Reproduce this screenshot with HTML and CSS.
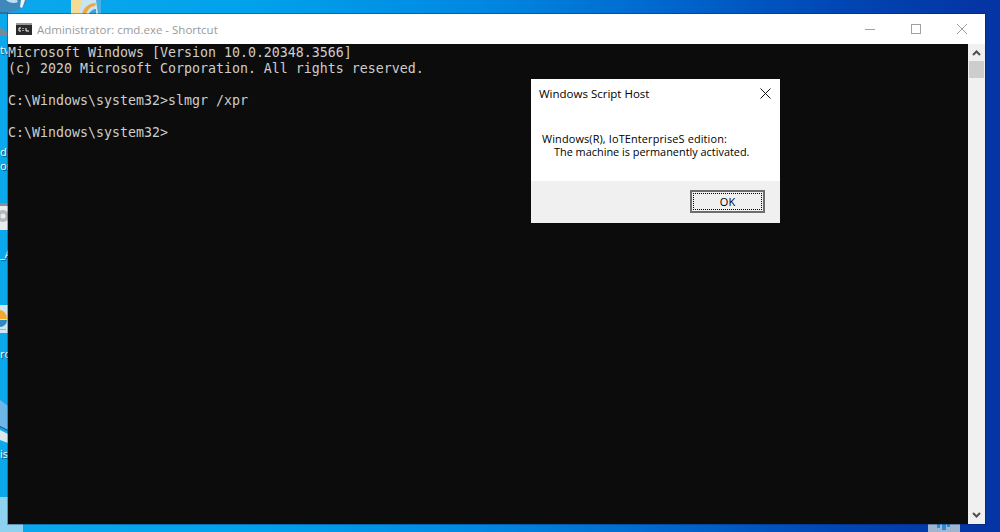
FILE: index.html
```html
<!DOCTYPE html>
<html lang="en">
<head>
<meta charset="utf-8">
<title>cmd</title>
<link rel="stylesheet" href="styles.css">
</head>
<body>
<main class="desktop">
  <div class="dicon folder-top"><svg width="32" height="14" viewBox="0 0 32 14"><path d="M0 0h30v14H0z" fill="#f4dc94"/><path d="M11 0h19v14H8z" fill="#c6e6f5"/><path d="M11 14C13 7 18 3 25 3l-1 3c-4 0-7 3-9 8z" fill="#f2a53a"/><path d="M18 14c1-3 4-5 7-5v5z" fill="#3f9fd6"/><path d="M25 0h5v14h-3z" fill="#4eaedd"/></svg></div>
  <div class="dicon globe"><svg width="30" height="40" viewBox="0 0 30 40"><path d="M0 0h27c-1 6-8 11-16 12-4 1-8 1-11 0z" fill="#3f88bb"/><path d="M6 0c3 3 8 4 12 2l-1-2z" fill="#bfe0f2"/><path d="M21 0h4c-1 3-2 6-3 8l-2-1z" fill="#e8f4fa"/><path d="M0 27l8 6v3H0z" fill="#78899a"/><path d="M0 12h8v2H0z" fill="#2d6f9f"/></svg></div>
  <span class="dlabel l1">tv</span>
  <span class="dlabel l2">d.</span>
  <span class="dlabel l3">or</span>
  <div class="dicon gear"><svg width="8" height="27" viewBox="0 0 8 27"><rect width="8" height="27" fill="#e9ebec"/><rect width="8" height="3" fill="#8b8f93"/><circle cx="3" cy="13" r="6" fill="#b4b8bc"/><circle cx="3" cy="13" r="2.5" fill="#e9ebec"/></svg></div>
  <span class="dlabel l4">_A</span>
  <div class="dicon sun"><svg width="8" height="28" viewBox="0 0 8 28"><rect width="8" height="28" fill="#cfe6f3"/><path d="M0 5a7 9 0 0 1 7 9H0z" fill="#f2a92e"/><path d="M0 15h7a7 7 0 0 1-7 7z" fill="#2f87c4"/><rect y="24" width="6" height="1" fill="#e8a53a"/></svg></div>
  <span class="dlabel l5">ro</span>
  <div class="dicon drive"><svg width="8" height="46" viewBox="0 0 8 46"><path d="M0 0l8 6v24L0 26z" fill="#6db7e8"/><path d="M0 26l8 4v1l-8-4z" fill="#1d4f7a"/><path d="M0 30l8 4v9l-8-3z" fill="#dfe7ee"/></svg></div>
  <span class="dlabel l6">is</span>
  <div class="dicon corner"></div>
  <div class="dicon tray"><svg width="32" height="8" viewBox="0 0 32 8"><rect width="32" height="8" fill="#9fb4cf"/><path d="M9 0h3v4H9zM14 0h4v6h-4zM19 0h3v3h-3z" fill="#1f8fe0"/></svg></div>

  <section class="console">
    <header class="titlebar">
      <svg class="appicon" width="16" height="12" viewBox="0 0 16 12"><rect width="16" height="12" fill="#2a2a2a"/><rect width="16" height="2" fill="#9a9a9a"/><path d="M3 5h2M3 5v3M3 8h2M7 5v1M7 7v1M10 5v3M10 8h3" stroke="#fff" fill="none"/></svg>
      <h1 class="wintitle">Administrator: cmd.exe - Shortcut</h1>
      <div class="controls">
        <span class="ctl"><svg width="10" height="10" viewBox="0 0 10 10"><path d="M0 5.5h10" stroke="#a0a0a0"/></svg></span>
        <span class="ctl"><svg width="10" height="10" viewBox="0 0 10 10"><rect x=".5" y=".5" width="9" height="9" fill="none" stroke="#a0a0a0"/></svg></span>
        <span class="ctl"><svg width="10" height="10" viewBox="0 0 10 10"><path d="M0 0l10 10M10 0L0 10" stroke="#a0a0a0"/></svg></span>
      </div>
    </header>
    <div class="body">
      <pre class="term">Microsoft Windows [Version 10.0.20348.3566]
(c) 2020 Microsoft Corporation. All rights reserved.

C:\Windows\system32&gt;slmgr /xpr

C:\Windows\system32&gt;</pre>
      <aside class="scrollbar">
        <svg class="arrow" width="9" height="6" viewBox="0 0 9 6"><path d="M1 5l3.5-3.5L8 5" fill="none" stroke="#505050" stroke-width="2"/></svg>
        <div class="thumb"></div>
        <svg class="arrow down" width="9" height="6" viewBox="0 0 9 6"><path d="M1 1l3.5 3.5L8 1" fill="none" stroke="#505050" stroke-width="2"/></svg>
      </aside>
    </div>
  </section>

  <section class="dialog">
    <header class="dlg-head">
      <h2 class="dlg-title">Windows Script Host</h2>
      <svg width="11" height="11" viewBox="0 0 11 11"><path d="M.5.5l10 10M10.5.5l-10 10" stroke="#111" fill="none"/></svg>
    </header>
    <div class="dlg-msg">
      <p class="line first">Windows(R), IoTEnterpriseS edition:</p>
      <p class="line indent">The machine is permanently activated.</p>
    </div>
    <footer class="dlg-foot">
      <button class="ok"><span class="ok-in">OK</span></button>
    </footer>
  </section>
</main>
</body>
</html>
```
FILE: styles.css
```css
* { box-sizing: border-box; margin: 0; padding: 0; }
html, body { width: 1000px; height: 532px; overflow: hidden; }
body { font-family: "Open Sans", "Noto Sans", sans-serif; }
.desktop {
  position: relative; width: 1000px; height: 532px; overflow: hidden;
  background: linear-gradient(90deg, #0ca8ec 0, #00a2ec 250px, #0088e2 480px, #0064cc 680px, #0046b4 840px, #0534a4 985px, #0535a5 1000px);
}
.dicon { position: absolute; line-height: 0; }
.folder-top { left: 71px; top: 0; }
.globe { left: 0; top: 0; }
.gear { left: 0; top: 203px; }
.sun { left: 0; top: 305px; }
.drive { left: 0; top: 400px; }
.corner { left: 0; top: 497px; width: 23px; height: 35px; background: #8ed2ef; }
.tray { left: 928px; top: 524px; }
.dlabel { position: absolute; left: 0; font-size: 11px; line-height: 12px; color: #fff; white-space: nowrap; text-shadow: 1px 1px 1px rgba(0,0,0,.6); }
.l1 { top: 44px; } .l2 { top: 146px; } .l3 { top: 160px; } .l4 { top: 248px; } .l5 { top: 348px; } .l6 { top: 448px; }

.console { position: absolute; left: 8px; top: 14px; width: 977px; height: 510px; display: flex; flex-direction: column; background: #fff; box-shadow: 0 0 0 1px rgba(0,30,80,.35); }
.titlebar { height: 30px; display: flex; align-items: center; padding-left: 8px; background: #fff; }
.appicon { flex: none; }
.wintitle { margin-left: 5px; font-size: 11.5px; font-weight: 400; color: #9a9a9a; flex: 1; }
.controls { display: flex; }
.ctl { width: 46px; height: 30px; display: flex; align-items: center; justify-content: center; }
.body { flex: 1; display: flex; min-height: 0; }
.term { flex: 1; padding-top: 1px; background: #0c0c0c; color: #cccccc; font-family: "DejaVu Sans Mono", monospace; font-size: 13.29px; line-height: 16px; }
.scrollbar { width: 17px; background: #f0f0f0; display: flex; flex-direction: column; align-items: center; padding-top: 6px; padding-bottom: 6px; }
.arrow { flex: none; }
.thumb { width: 15px; height: 17px; margin-top: 5px; background: #cdcdcd; }
.arrow.down { margin-top: auto; }

.dialog { position: absolute; left: 531px; top: 79px; width: 249px; height: 144px; background: #fff; display: flex; flex-direction: column; }
.dlg-head { height: 28px; display: flex; align-items: center; justify-content: space-between; padding: 0 9px 0 8px; }
.dlg-title { font-size: 11.5px; font-weight: 400; color: #000; }
.dlg-msg { flex: 1; padding: 25px 0 0 11px; font-size: 10.9px; line-height: 13px; color: #000; }
.line { white-space: nowrap; }
.first { letter-spacing: .14px; }
.indent { padding-left: 12px; }
.dlg-foot { height: 42px; background: #f0f0f0; display: flex; justify-content: flex-end; align-items: flex-start; padding: 9px 15px 0 0; }
.ok { width: 75px; height: 23px; background: #f0f0f0; border: 2px solid #6e6e6e; padding: 1px; font-family: inherit; display: flex; }
.ok-in { flex: 1; border: 1px dotted #000; font-size: 11px; line-height: 15px; color: #000; text-align: center; }
```
